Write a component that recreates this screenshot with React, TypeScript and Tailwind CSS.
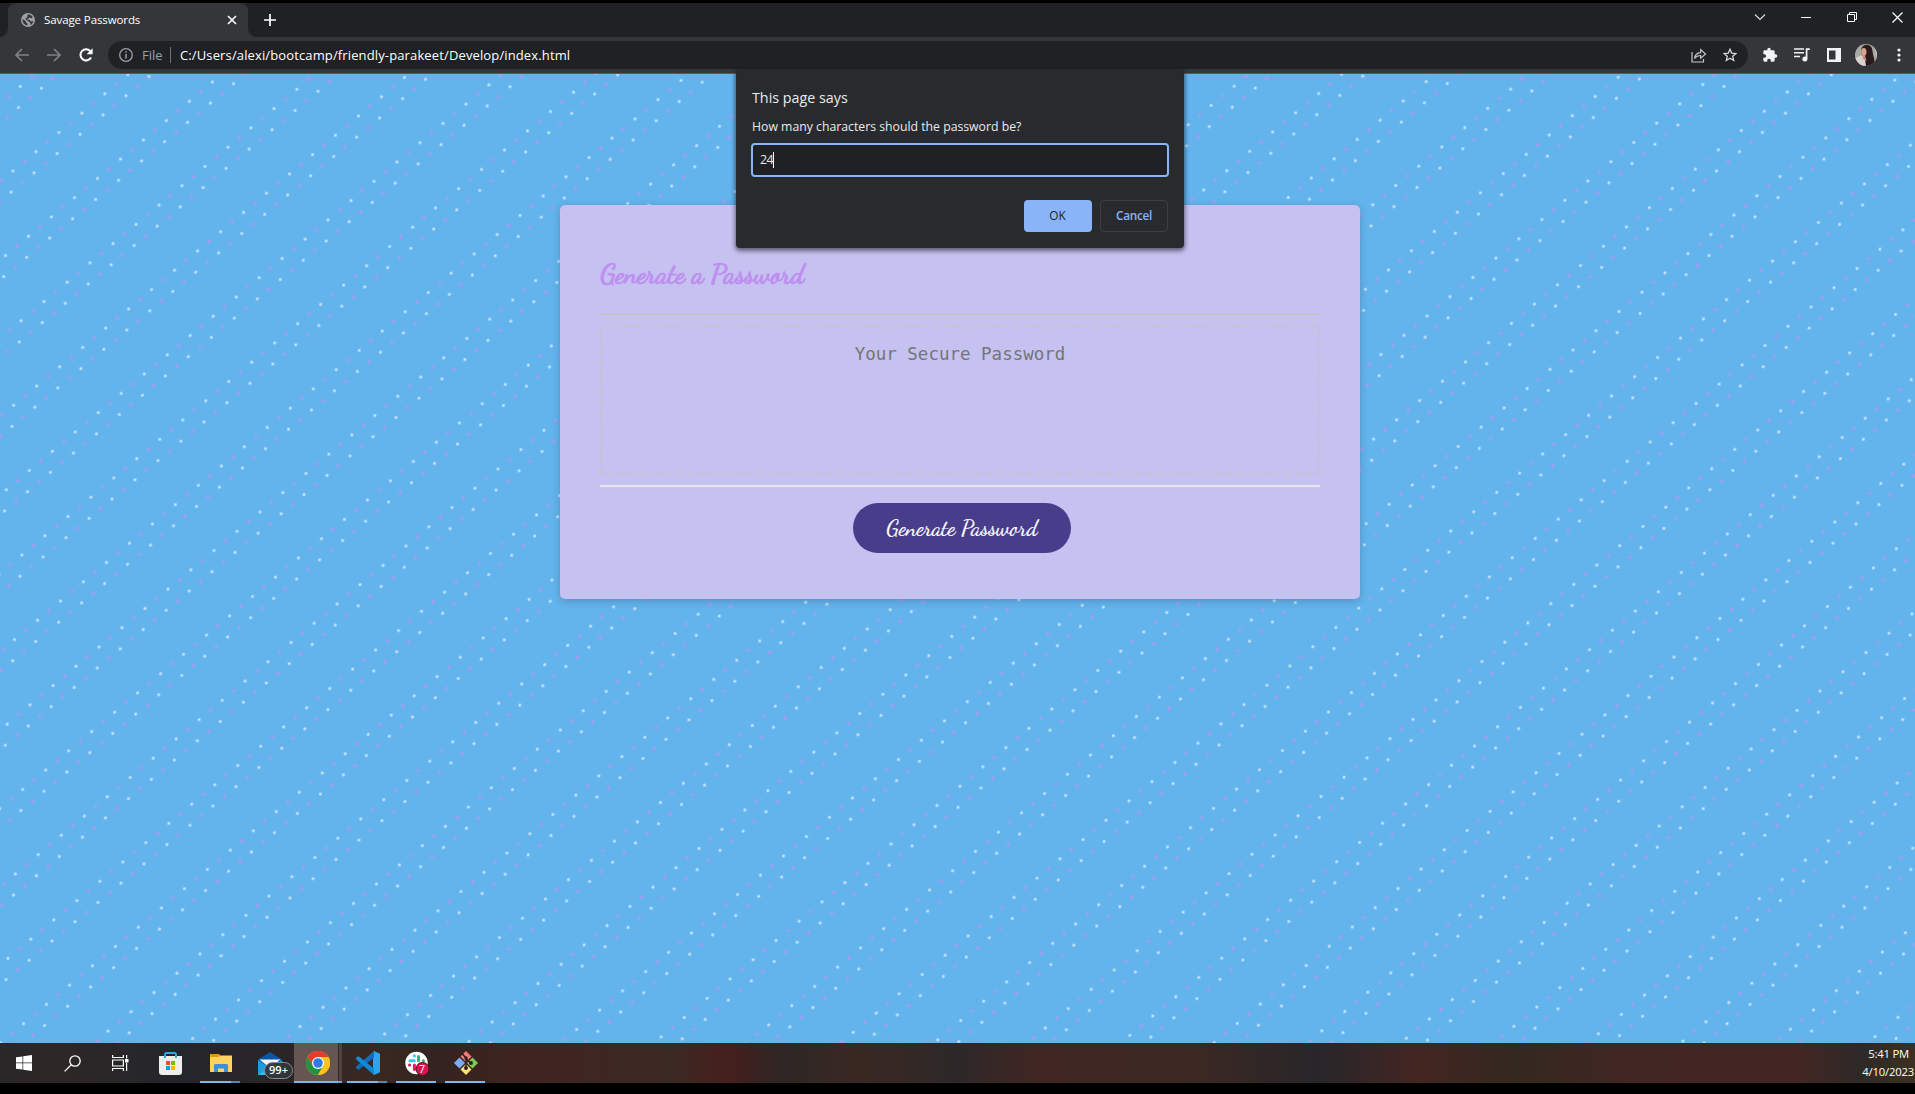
import type { ReactNode } from "react";

function GlobeIcon() {
  return (
    <svg width="14" height="14" viewBox="0 0 14 14">
      <circle cx="7" cy="7" r="7" fill="#9aa0a6" />
      <path d="M1.500 6 5 8.200v1.200l1.500 1.300v1.700C3.600 12.200 1.300 9.600 1.500 6Z" fill="#35363a" />
      <path d="M6.500 1.500C8.500 1.200 10.500 2 11.800 4L10 5.200 8.300 4.500 7.500 5.600 5.600 6.200 8.800 7.200 10 8.600 12.300 8.200C12 10 10.700 11.400 9.600 11.900L9.300 9.800 7.600 8.600 5 6.800 4.600 5.300 6.500 4Z" fill="#35363a" />
    </svg>
  );
}

function TabStrip() {
  return (
    <div className="flex h-[34px] items-stretch bg-[#202124] text-white">
      <div className="relative ml-2 flex w-[240px] items-center rounded-t-lg bg-[#35363a] pl-[13px] pr-[11px]">
        <span className="absolute -left-2 bottom-0 size-2 bg-[radial-gradient(circle_at_0_0,#202124_7.5px,#35363a_8px)]" />
        <span className="absolute -right-2 bottom-0 size-2 bg-[radial-gradient(circle_at_100%_0,#202124_7.5px,#35363a_8px)]" />
        <GlobeIcon />
        <span className="ml-[9px] text-[11.500px] tracking-[-0.1px] whitespace-nowrap">Savage Passwords</span>
        <svg className="ml-auto" width="10" height="10" viewBox="0 0 10 10" stroke="#fff" strokeWidth="1.600">
          <path d="M1 1l8 8M9 1l-8 8" />
        </svg>
      </div>
      <svg className="ml-4 self-center" width="12" height="12" viewBox="0 0 12 12" stroke="#fff" strokeWidth="1.700">
        <path d="M6 0v12M0 6h12" />
      </svg>
      <div className="ml-auto flex items-center pr-[12px] pb-[6px]">
        <svg width="12" height="8" viewBox="0 0 12 8" fill="none" stroke="#dfe0e2" strokeWidth="1.100">
          <path d="M1 1.500l5 5 5-5" />
        </svg>
        <svg width="10" height="10" viewBox="0 0 10 10" stroke="#fff" className="ml-[35px]">
          <path d="M0 5.500h10" />
        </svg>
        <svg width="10" height="10" viewBox="0 0 10 10" fill="none" stroke="#fff" className="ml-[36px]">
          <path d="M.5 2.500h7v7h-7zM2.500 2.500v-2h7v7h-2" />
        </svg>
        <svg width="11" height="11" viewBox="0 0 11 11" stroke="#fff" strokeWidth="1.200" className="ml-[35px]">
          <path d="M.5.5l10 10M10.500.5l-10 10" />
        </svg>
      </div>
    </div>
  );
}

function Toolbar() {
  return (
    <div className="flex h-[37px] items-center border-b border-[#5a5b5e] bg-[#35363a] pl-[15px]">
      <svg width="14" height="14" viewBox="0 0 14 14" fill="none" stroke="#7e8186" strokeWidth="1.600">
        <path d="M14 7H1.500M7 1L1 7l6 6" />
      </svg>
      <svg className="ml-[18px]" width="14" height="14" viewBox="0 0 14 14" fill="none" stroke="#7e8186" strokeWidth="1.600">
        <path d="M0 7h12.500M7 1l6 6-6 6" />
      </svg>
      <svg className="ml-[18px]" width="14" height="14" viewBox="0 0 14 14" fill="none" stroke="#fff" strokeWidth="2">
        <path d="M12 9.500A5.600 5.600 0 1 1 11.300 3.200" />
        <path d="M13.600 0.300v6H7.600Z" fill="#fff" stroke="none" />
      </svg>
      <div className="ml-[15px] flex h-7 w-[1640px] items-center rounded-full bg-[#202124] pl-[11px] pr-[11px] text-[13px] whitespace-nowrap">
        <svg width="14" height="14" viewBox="0 0 14 14" fill="none" stroke="#9aa0a6" strokeWidth="1.300">
          <circle cx="7" cy="7" r="6.300" />
          <path d="M7 6v4.500M7 3.300v1.500" strokeWidth="1.500" />
        </svg>
        <span className="ml-[9px] w-[28px] pt-px text-[#9aa0a6]">File</span>
        <span className="h-4 w-px bg-[#6d7074]" />
        <span className="ml-[9px] pt-px tracking-[0.13px] text-white">C:/Users/alexi/bootcamp/friendly-parakeet/Develop/index.html</span>
        <svg className="ml-auto" width="16" height="15" viewBox="0 0 16 15" fill="none" stroke="#c4c7c5" strokeWidth="1.200">
          <path d="M1 4v10h11.500v-3M3.500 10.500C4 7 6.500 4.800 9.700 4.600V1.500L14.600 6 9.700 10.300V7.500C7 7.500 5 8.500 3.500 10.500Z" />
        </svg>
        <svg className="ml-[16px]" width="14" height="14" viewBox="0 0 14 14" fill="none" stroke="#d4d6d9" strokeWidth="1.300">
          <path d="M7 1.200 8.700 5.100 13 5.500 9.700 8.300 10.700 12.500 7 10.300 3.300 12.500 4.300 8.300 1 5.500 5.300 5.100Z" />
        </svg>
      </div>
      <svg className="ml-[14px]" width="16" height="16" viewBox="0 0 24 24" fill="#f1f3f4">
        <path d="M20.500 11H19V7a2 2 0 0 0-2-2h-4V3.500a2.500 2.500 0 0 0-5 0V5H4a2 2 0 0 0-2 2v3.800h1.500a2.700 2.700 0 0 1 0 5.400H2V20a2 2 0 0 0 2 2h3.800v-1.500a2.700 2.700 0 0 1 5.400 0V22H17a2 2 0 0 0 2-2v-4h1.500a2.500 2.500 0 0 0 0-5Z" />
      </svg>
      <svg className="ml-4" width="16" height="14" viewBox="0 0 16 14">
        <path d="M0 1h10M0 4.800h10M0 8.600h6" stroke="#f1f3f4" strokeWidth="1.500" />
        <path d="M11.800 1.200h4M12.600 1v9.500" stroke="#f1f3f4" strokeWidth="1.700" />
        <circle cx="10.900" cy="10.900" r="2.500" fill="#f1f3f4" />
      </svg>
      <svg className="ml-[17px]" width="14" height="14" viewBox="0 0 14 14">
        <path fillRule="evenodd" d="M0 0h14v14H0zM2 2.500h6.500v9H2z" fill="#f1f3f4" />
      </svg>
      <svg className="ml-[14px]" width="22" height="22" viewBox="0 0 22 22">
        <defs>
          <clipPath id="avatar"><circle cx="11" cy="11" r="11" /></clipPath>
        </defs>
        <g clipPath="url(#avatar)">
          <rect width="22" height="22" fill="#a5aaa2" />
          <path d="M18 2c3 4 3 9 4 14V2Z" fill="#c9c4c2" />
          <path d="M6 6C7-1 17-1 17.500 7c.3 5 3 9 2 15H9C10 18 6 12 6 6Z" fill="#2c1a1d" />
          <ellipse cx="8.800" cy="8" rx="2.700" ry="4" fill="#d9a48f" />
          <path d="M0 14 7 11l3 4 1 7H1Z" fill="#d8d2ce" />
          <path d="M7.500 11.500l2.700.5 1.300 5-3.500-2Z" fill="#c98d78" />
        </g>
      </svg>
      <svg className="ml-[20px]" width="4" height="14" viewBox="0 0 4 14" fill="#f1f3f4">
        <circle cx="2" cy="2" r="1.600" />
        <circle cx="2" cy="7" r="1.600" />
        <circle cx="2" cy="12" r="1.600" />
      </svg>
    </div>
  );
}

function Confetti() {
  return (
    <svg className="absolute inset-0 size-full">
      <defs>
        <pattern id="dots" width="30" height="60" patternUnits="userSpaceOnUse" patternTransform="translate(20.3 12.400) rotate(-40) translate(-5 -5)">
          <circle cx="5" cy="5" r="1.600" fill="#c3e4fb" />
          <circle cx="20" cy="20" r="1.600" fill="#c3e4fb" />
          <circle cx="20" cy="5" r="1.600" fill="#b794f4" />
          <circle cx="5" cy="20" r="1.600" fill="#b794f4" />
        </pattern>
      </defs>
      <rect width="100%" height="100%" fill="url(#dots)" />
    </svg>
  );
}

function PasswordCard() {
  return (
    <div className="relative mt-[131px] ml-[560px] flex h-[394px] w-[800px] flex-col rounded-[5px] bg-[#c5c1f0] px-10 shadow-[0_2px_8px_rgba(0,0,0,0.2)]">
      <h2 className="mt-[49px] h-[59px] font-['Dancing_Script',cursive] text-[26.700px] leading-[40px] font-bold text-[#bf8ff0] [-webkit-text-stroke:0.7px_#bf8ff0]">
        Generate a Password
      </h2>
      <div className="h-[174px] border-t-2 border-b-2 border-t-[#c3c4cf] border-b-[#ebe6ee] py-[10px]">
        <div className="h-[150px] rounded-[4px] border-2 border-dashed border-[#c3c4cf] pt-[14px] text-center font-['DejaVu_Sans_Mono',monospace] text-[17.500px] leading-[26px] text-[#757575]">
          Your Secure Password
        </div>
      </div>
      <button className="mt-4 ml-[253px] h-[50px] w-[218px] rounded-full bg-[#483d8b] font-['Dancing_Script',cursive] text-[22.300px] text-white [-webkit-text-stroke:0.2px_white]">
        Generate Password
      </button>
    </div>
  );
}

function PromptDialog() {
  return (
    <div className="absolute top-[69px] left-[736px] flex h-[179px] w-[448px] flex-col rounded-[4px] bg-[#292a2d] px-[15px] text-[#e8eaed] shadow-[0_2px_4px_1px_rgba(0,0,0,0.5)]">
      <div className="mt-[18px] ml-px text-[14.300px] leading-[22px]">This page says</div>
      <div className="mt-2 ml-px text-[12.250px] leading-[20px] whitespace-nowrap">How many characters should the password be?</div>
      <div className="mt-[6px] flex h-[34px] items-center rounded-[4px] border-2 border-[#8ab4f8] bg-[#202124] pl-[7px] text-[12.500px] tracking-[-0.6px]">
        24<span className="h-4 w-px bg-white" />
      </div>
      <div className="mt-[23px] flex h-8 gap-2 pl-[273px] text-[11.800px]">
        <button className="w-[68px] rounded-[4px] bg-[#8ab4f8] pr-px text-[#202124]">OK</button>
        <button className="w-[68px] rounded-[4px] border border-[#3c4043] font-semibold tracking-[-0.3px] text-[#8ab4f8]">Cancel</button>
      </div>
    </div>
  );
}

function Task({ children, className = "w-[49px]" }: { children: ReactNode; className?: string }) {
  return <div className={"relative flex h-full items-center justify-center " + className}>{children}</div>;
}

function Running({ stacked = false }: { stacked?: boolean }) {
  return (
    <span className="absolute bottom-0 left-[4px] flex h-[2px] w-10">
      <span className="flex-1 bg-[#76b9ed]" />
      {stacked && <span className="w-[9px] bg-[#5687ac]" />}
    </span>
  );
}

function Taskbar() {
  return (
    <div className="flex h-10 items-stretch bg-[linear-gradient(90deg,#2a2729_0%,#2e2726_3%,#24262b_9%,#2b2527_15%,#3a2822_19%,#35231f_23%,#402421_28%,#3b2923_35%,#451f1d_38%,#2e2726_41%,#3a2822_45%,#2d2829_50%,#402622_54%,#3c2822_62%,#28262a_69%,#442522_74%,#33281f_79%,#422623_85%,#432623_94%,#2e2927_97%,#3b3022_100%)] text-white">
      <Task className="-ml-px w-[49px]">
        <svg width="16" height="16" viewBox="0 0 16 16" fill="#fff">
          <path d="M0 2.300 6.500 1.400v6.200H0zM7.200 1.300 16 0v7.600H7.200zM0 8.300h6.500v6.300L0 13.700zM7.200 8.300H16V16l-8.800-1.300z" />
        </svg>
      </Task>
      <Task className="w-[49px] pr-px">
        <svg width="17" height="17" viewBox="0 0 17 17" fill="none" stroke="#fff" strokeWidth="1.300">
          <circle cx="11" cy="6" r="5.200" />
          <path d="M7.300 9.700.6 16.400" />
        </svg>
      </Task>
      <Task className="w-[49px] pr-[3px]">
        <svg width="17" height="16" viewBox="0 0 17 16" fill="none" stroke="#fff" strokeWidth="1.200">
          <path d="M.6 0v2.500h10.800V0M.6 16v-2.500h10.800V16M.6 5h10.800v6H.6zM14.600 0v3.500M14.600 8v8" />
          <path d="M13 4h3.500v3.500H13z" fill="#fff" stroke="none" />
        </svg>
      </Task>
      <Task>
        <svg width="23" height="23" viewBox="0 0 23 23">
          <path d="M6 6V2.500C6 1.500 6.500 1 7.500 1h8c1 0 1.500.5 1.500 1.500V6" fill="none" stroke="#26aee4" strokeWidth="2" />
          <path d="M0 4h23v16a3 3 0 0 1-3 3H3a3 3 0 0 1-3-3z" fill="#eeeeee" />
          <path d="M5 6V3h2v3zM16 6V3h2v3z" fill="#26aee4" />
          <path d="M7 9h4v4H7z" fill="#f25022" />
          <path d="M12 9h4v4h-4z" fill="#7fba00" />
          <path d="M7 14h4v4H7z" fill="#00a4ef" />
          <path d="M12 14h4v4h-4z" fill="#ffb900" />
        </svg>
      </Task>
      <Task className="ml-px w-[49px]">
        <svg width="22" height="18" viewBox="0 0 22 18">
          <path d="M0 0h9l1.500 1.500V4H0z" fill="#e09b12" />
          <path d="M0 3h8.500l2-1.500H22V18H0z" fill="#ffd25f" />
          <path d="M4 18v-6.500A1.500 1.500 0 0 1 5.500 10h11a1.500 1.500 0 0 1 1.500 1.500V18h-4v-3.500H8V18z" fill="#3a8fd6" />
        </svg>
        <Running stacked />
      </Task>
      <Task>
        <svg width="24" height="23" viewBox="0 0 24 23">
          <path d="M0 7.500 12 0l12 7.500V16H0z" fill="#0a55a6" />
          <path d="M1.500 7.500h21L12 16z" fill="#f2f6fa" />
          <path d="M0 8l12 8L24 8v15H0z" fill="#1e9be8" />
          <path d="M0 23 12 14.500 24 23z" fill="#35b9f1" />
        </svg>
        <span className="absolute top-[19px] left-[19px] flex h-[17px] w-[29px] items-center justify-center rounded-full border border-[#8d8f91] bg-[#303438]/95 text-[11px] font-semibold">99+</span>
      </Task>
      <Task className="w-[44px] bg-[#665551] pl-[4px]">
        <svg width="24" height="24" viewBox="0 0 24 24">
          <circle cx="12" cy="12" r="12" fill="#fbbc05" />
          <path d="M12 12 6.800 15 1.600 6A12 12 0 0 1 22.400 6H12Z" fill="#e33b2e" />
          <path d="M12 12 6.800 15 1.600 6A12 12 0 0 0 12 24l5.200-9Z" fill="#229342" />
          <path d="M12 6H22.400A12 12 0 0 1 12 24l5.200-9Z" fill="#fcc31e" />
          <circle cx="12" cy="12" r="6" fill="#fff" />
          <circle cx="12" cy="12" r="4.800" fill="#2f7be8" />
        </svg>
        <span className="absolute bottom-0 left-0 h-[2px] w-[44px] bg-[#76b9ed]" />
      </Task>
      <div className="relative w-[4px] border-l border-[#35292a] bg-[#51423f]">
        <span className="absolute right-0 bottom-0 h-[2px] w-[4px] bg-[#6aa7d6]" />
      </div>
      <Task className="ml-px w-[49px]">
        <svg width="24" height="24" viewBox="0 0 24 24">
          <path d="M18 0 24 2.800v18.400L18 24 17 23V1z" fill="#2ba5f0" />
          <path d="M18 0v6.500L3 18.500l-1 .2L0 17v-1.300Z" fill="#0b70bb" />
          <path d="M18 24v-6.500L3 5.500l-1-.2L0 7v1.300Z" fill="#118ad6" />
        </svg>
        <Running stacked />
      </Task>
      <Task>
        <svg width="24" height="24" viewBox="0 0 24 24" className="overflow-visible">
          <circle cx="11.500" cy="12" r="11.200" fill="#fff" />
          <g strokeWidth="3" strokeLinecap="round">
            <path d="M5 9.700h4.300M9.400 4.800v.2" stroke="#36c5f0" />
            <path d="M13.500 5.500v4.200M18.300 9.700h.2" stroke="#2eb67d" />
            <path d="M9.400 14v4.500M4.500 14h.2" stroke="#e01e5a" />
            <path d="M13.500 14h4.300" stroke="#ecb22e" />
          </g>
          <circle cx="17.500" cy="18" r="6.500" fill="#d9144e" stroke="#3c0f1c" strokeWidth="1" />
        </svg>
        <span className="absolute top-[19px] left-[27px] text-[10.500px] leading-[14px]">7</span>
        <Running />
      </Task>
      <Task>
        <svg width="24" height="24" viewBox="0 0 24 24">
          <path d="M12 0 17.500 5.500 12 11 6.500 5.500Z" fill="#f67c7c" />
          <path d="M5.500 6.500 11 12 5.500 17.500 0 12Z" fill="#7cabf8" />
          <path d="M18.500 6.500 24 12 18.500 17.500 13 12Z" fill="#80c957" />
          <path d="M12 13 17.500 18.500 12 24 6.500 18.500Z" fill="#fbdf78" />
          <path d="M8 2.500 12 7v10M12 7.500l4.500 4.500" fill="none" stroke="#302120" strokeWidth="1.500" />
          <circle cx="12" cy="7" r="1.700" fill="#302120" />
          <circle cx="12" cy="17" r="2" fill="#302120" />
          <circle cx="17" cy="12" r="2" fill="#302120" />
        </svg>
        <Running />
      </Task>
      <div className="ml-auto flex w-[54px] flex-col items-end pt-[2px] text-[11.300px] leading-[18px] tracking-[-0.2px] whitespace-nowrap">
        <span className="mr-[6px]">5:41 PM</span>
        <span className="mr-px">4/10/2023</span>
      </div>
    </div>
  );
}

export default function App() {
  return (
    <div className="relative flex h-[1094px] w-[1915px] flex-col overflow-hidden bg-black pt-[3px] pb-[11px] font-['Open_Sans',sans-serif]">
      <TabStrip />
      <Toolbar />
      <main className="relative flex-1 bg-[#63b3ed]">
        <Confetti />
        <div className="flow-root">
          <PasswordCard />
        </div>
      </main>
      <Taskbar />
      <PromptDialog />
    </div>
  );
}
